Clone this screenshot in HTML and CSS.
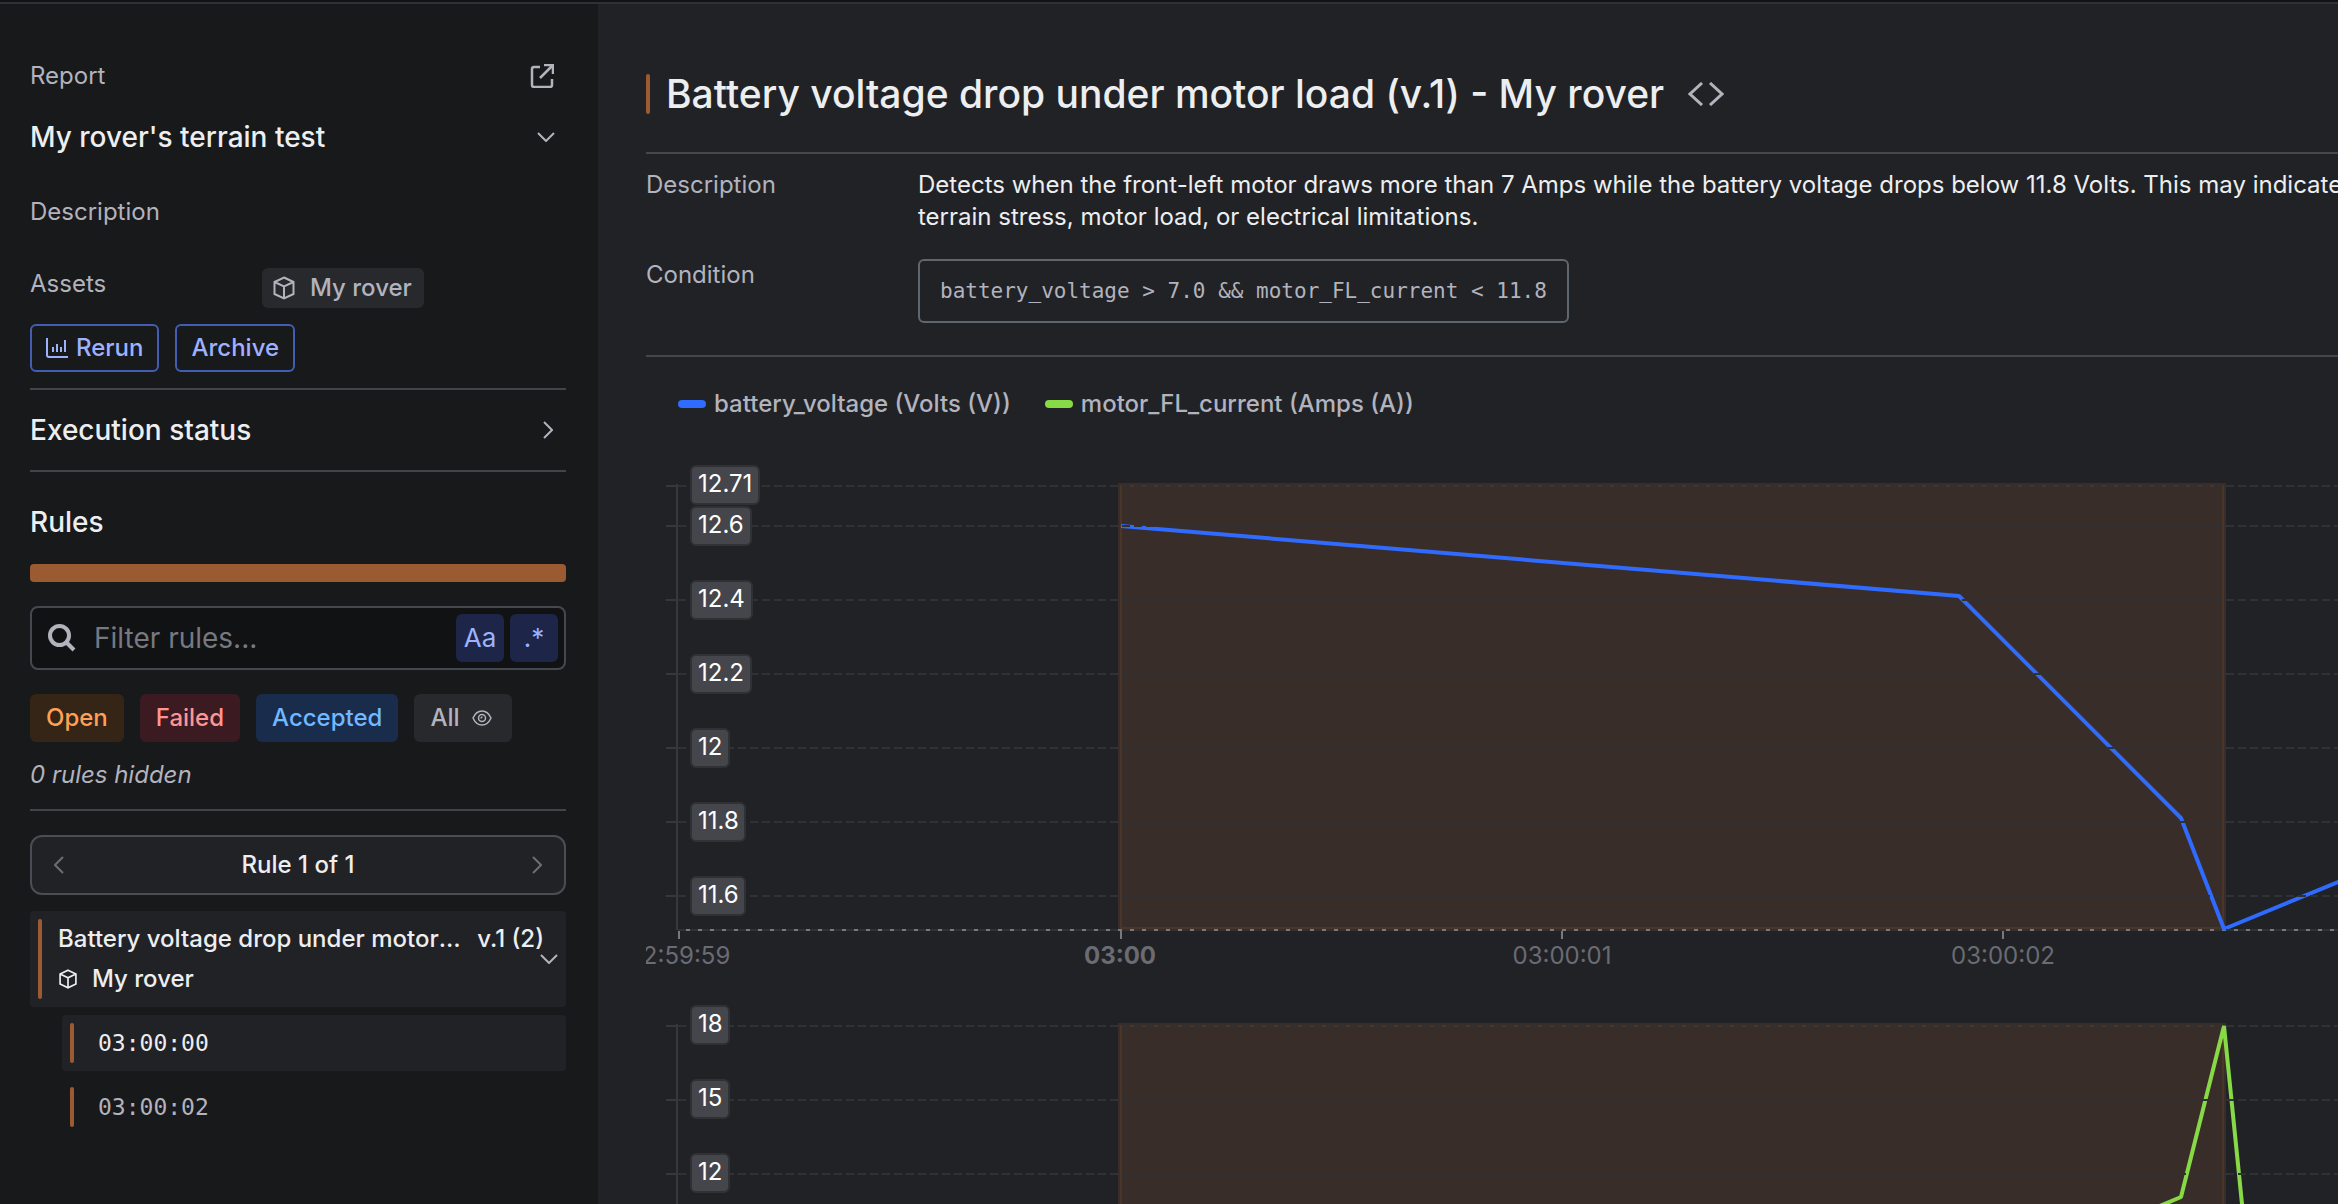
FILE: index.html
```html
<!DOCTYPE html>
<html lang="en">
  <head>
    <meta charset="UTF-8" />
    <meta name="viewport" content="width=device-width, initial-scale=1.0" />
    <title>My rover's terrain test</title>
    <link rel="stylesheet" href="styles.css">
  </head>
  <body>
    <!-- shared icons -->
    <svg class="sprite" aria-hidden="true">
      <symbol id="chevron-down" viewBox="0 0 18 10">
        <path d="M1 1l8 8 8-8" />
      </symbol>
      <symbol id="chevron-right" viewBox="0 0 10 18">
        <path d="M1 1l8 8-8 8" />
      </symbol>
      <symbol id="chevron-left" viewBox="0 0 10 18">
        <path d="M9 1L1 9l8 8" />
      </symbol>
      <symbol id="cube" viewBox="0 0 24 24">
        <path d="M12 1.5l9.500 4.500v12L12 22.500l-9.500-4.500v-12zM2.500 6L12 10.500l9.500-4.500M12 10.500v12" />
      </symbol>
    </svg>

    <div class="topbar"></div>
    <div class="layout">
      <aside class="sidebar">
        <div class="sidebar__row">
          <span class="label">Report</span>
          <a class="icon-link" href="#" aria-label="Open report">
            <svg class="icon icon--open" viewBox="0 0 24 24">
              <path d="M10 3H4a2 2 0 0 0-2 2v16a2 2 0 0 0 2 2h16a2 2 0 0 0 2-2v-6M14 1h9v9M23 1L10 14" />
            </svg>
          </a>
        </div>
        <button class="report-select" type="button">
          My rover's terrain test
          <svg class="icon icon--down"><use href="#chevron-down" /></svg>
        </button>
        <p class="label sidebar__description">Description</p>
        <div class="assets">
          <span class="label">Assets</span>
          <span class="asset-badge">
            <svg class="icon icon--cube"><use href="#cube" /></svg>My rover
          </span>
        </div>
        <div class="actions">
          <button class="btn" type="button">
            <svg class="icon icon--chart" viewBox="0 0 22 20">
              <path d="M1 0v17a2 2 0 0 0 2 2h19M7 9v5M11 6v8M15 9v5M19 2v12" />
            </svg>
            Rerun
          </button>
          <button class="btn" type="button">Archive</button>
        </div>

        <button class="execution" type="button">
          Execution status
          <svg class="icon icon--side"><use href="#chevron-right" /></svg>
        </button>

        <h2 class="sidebar__title">Rules</h2>
        <div class="progress"></div>
        <div class="search">
          <label class="search__label" for="filter">
            <svg class="icon icon--search" viewBox="0 0 28 28" aria-label="Filter rules">
              <circle cx="11.5" cy="11.5" r="9.5" />
              <path d="M18.5 18.5L26 26" />
            </svg>
          </label>
          <input class="search__input" id="filter" type="text" placeholder="Filter rules..." />
          <button class="search__btn" type="button" aria-label="Match case">Aa</button>
          <button class="search__btn" type="button" aria-label="Use regular expression">.*</button>
        </div>
        <div class="tags">
          <button class="tag tag--open" type="button">Open</button>
          <button class="tag tag--failed" type="button">Failed</button>
          <button class="tag tag--accepted" type="button">Accepted</button>
          <button class="tag tag--all" type="button">
            All
            <svg class="icon icon--eye" viewBox="0 0 20 20">
              <path d="M1 10c2-4.500 5-7 9-7s7 2.500 9 7c-2 4.500-5 7-9 7s-7-2.500-9-7z" />
              <circle cx="10" cy="10" r="3.5" />
              <path d="M10 8.500a1.500 1.500 0 0 1-1.500 1.500" />
            </svg>
          </button>
        </div>
        <p class="hidden-count">0 rules hidden</p>

        <div class="pager">
          <button class="pager__btn" type="button" aria-label="Previous rule">
            <svg class="icon icon--side"><use href="#chevron-left" /></svg>
          </button>
          <span>Rule 1 of 1</span>
          <button class="pager__btn" type="button" aria-label="Next rule">
            <svg class="icon icon--side"><use href="#chevron-right" /></svg>
          </button>
        </div>

        <button class="rule" type="button">
          <span class="bar"></span>
          <span class="rule__body">
            <span class="rule__head">
              <span class="rule__name">Battery voltage drop under motor load</span>
              <span>v.1 (2)</span>
            </span>
            <span class="rule__asset">
              <svg class="icon icon--cube-small"><use href="#cube" /></svg>My rover
            </span>
          </span>
          <svg class="icon icon--down"><use href="#chevron-down" /></svg>
        </button>
        <div class="times">
          <button class="time time--active" type="button"><span class="bar"></span>03:00:00</button>
          <button class="time" type="button"><span class="bar"></span>03:00:02</button>
        </div>
      </aside>

      <main class="main">
        <header class="main__header">
          <span class="bar bar--title"></span>
          <h1 class="main__title">Battery voltage drop under motor load (v.1) - My rover</h1>
          <button class="icon-link" type="button" aria-label="View code">
            <svg class="icon icon--code" viewBox="0 0 36 24">
              <path d="M14 1L2 12l12 11M22 1l12 11-12 11" />
            </svg>
          </button>
        </header>

        <dl class="details">
          <dt class="label">Description</dt>
          <dd>Detects when the front-left motor draws more than 7 Amps while the battery voltage drops below 11.8 Volts. This may indicate terrain stress, motor load, or electrical limitations.</dd>
          <dt class="label">Condition</dt>
          <dd><code class="condition">battery_voltage &gt; 7.0 &amp;&amp; motor_FL_current &lt; 11.8</code></dd>
        </dl>

        <ul class="legend">
          <li><span class="legend__key legend__key--voltage"></span>battery_voltage (Volts (V))</li>
          <li><span class="legend__key legend__key--current"></span>motor_FL_current (Amps (A))</li>
        </ul>

        <!-- battery voltage -->
        <svg class="chart" role="img" aria-label="battery_voltage">
          <rect class="chart__area" x="472" y="23" width="1108" height="446" />
          <path class="chart__area-edge" d="M475 26v442h1102V26z" />
          <path class="chart__base" d="M32 470H1800" />
          <path class="chart__tick" d="M33 471v8M475 471v8M916 471v8M1357 471v8M1798 471v8" />
          <path class="chart__line chart__line--voltage" d="M475 66L1313 136L1535 358L1578 469L1692 422L1800 377" />
          <path class="chart__grid" d="M32 26H1800M32 66H1800M32 140H1800M32 214H1800M32 288H1800M32 362H1800M32 436H1800M32 470H1800" />
          <path class="chart__axis" d="M31 24v446M20 26h12M20 66h12M20 140h12M20 214h12M20 288h12M20 362h12M20 436h12" />
          <g class="chart__box">
            <rect x="45" y="6" width="68" height="38" rx="5" />
            <rect x="45" y="47" width="60" height="38" rx="5" />
            <rect x="45" y="121" width="61" height="38" rx="5" />
            <rect x="45" y="195" width="60" height="38" rx="5" />
            <rect x="45" y="269" width="38" height="38" rx="5" />
            <rect x="45" y="343" width="54" height="38" rx="5" />
            <rect x="45" y="417" width="54" height="38" rx="5" />
          </g>
          <g class="chart__value">
            <text x="52" y="32">12.71</text>
            <text x="52" y="73">12.6</text>
            <text x="52" y="147">12.4</text>
            <text x="52" y="221">12.2</text>
            <text x="52" y="295">12</text>
            <text x="52" y="369">11.8</text>
            <text x="52" y="443">11.6</text>
          </g>
          <g class="chart__time">
            <text x="33" y="504">02:59:59</text>
            <text class="chart__time--major" x="474" y="504">03:00</text>
            <text x="916" y="504">03:00:01</text>
            <text x="1357" y="504">03:00:02</text>
          </g>
        </svg>

        <!-- motor current -->
        <svg class="chart" role="img" aria-label="motor_FL_current">
          <rect class="chart__area" x="472" y="43" width="1108" height="500" />
          <path class="chart__area-edge" d="M475 46v500h1102V46z" />
          <path class="chart__line chart__line--current" d="M1400 274L1535 217L1578 46L1596 224L1604 300" />
          <path class="chart__grid" d="M32 46H1800M32 120H1800M32 194H1800" />
          <path class="chart__axis" d="M31 44v476M20 46h12M20 120h12M20 194h12" />
          <g class="chart__box">
            <rect x="45" y="26" width="38" height="38" rx="5" />
            <rect x="45" y="100" width="38" height="38" rx="5" />
            <rect x="45" y="174" width="38" height="38" rx="5" />
          </g>
          <g class="chart__value">
            <text x="52" y="52">18</text>
            <text x="52" y="126">15</text>
            <text x="52" y="200">12</text>
          </g>
        </svg>
      </main>
    </div>
  </body>
</html>
```
FILE: styles.css
```css
* {
  margin: 0;
  padding: 0;
  box-sizing: border-box;
}

body {
  height: 100vh;
  display: flex;
  flex-direction: column;
  font-family: Inter, sans-serif;
  font-size: 24px;
  line-height: 32px;
  color: #edeef0;
  background-color: #212226;
}

button,
input {
  font: inherit;
  color: inherit;
  background: none;
  border: none;
}

button {
  cursor: pointer;
}

.sprite {
  position: absolute;
  width: 0;
  height: 0;
}

.topbar {
  flex: none;
  height: 4px;
  background-color: #111214;
  border-bottom: 2px solid #303136;
}

.layout {
  flex: 1;
  min-height: 0;
  display: flex;
  overflow: hidden;
}

.label {
  color: #b2b3bd;
}

.bar {
  flex: none;
  align-self: stretch;
  width: 4px;
  border-radius: 2px;
  background-color: #9a5b32;
}

/* icons */
.icon {
  flex: none;
  fill: none;
  stroke: #b2b3bd;
  stroke-width: 2;
}

.icon-link {
  display: flex;
}

.icon--open {
  width: 24px;
  height: 24px;
  stroke-width: 2.5;
}

.icon--down {
  width: 18px;
  height: 10px;
}

.icon--side {
  width: 10px;
  height: 18px;
}

.icon--cube {
  width: 24px;
  height: 24px;
}

.icon--cube-small {
  width: 20px;
  height: 20px;
  stroke: #edeef0;
}

.icon--chart {
  width: 22px;
  height: 20px;
  stroke: #9eb1ff;
}

.icon--search {
  width: 28px;
  height: 28px;
  stroke-width: 4;
}

.icon--eye {
  width: 20px;
  height: 20px;
  stroke-width: 1.5;
}

.icon--code {
  width: 36px;
  height: 24px;
  stroke-width: 3;
}

/* sidebar */
.sidebar {
  flex: none;
  width: 598px;
  padding: 56px 32px 0 30px;
  background-color: #18191b;
}

.sidebar__row,
.report-select,
.execution {
  width: 100%;
  display: flex;
  align-items: center;
  justify-content: space-between;
}

.sidebar__row {
  padding-right: 12px;
}

.report-select {
  margin-top: 25px;
  padding-right: 11px;
  font-size: 28px;
  font-weight: 500;
  line-height: 40px;
}

.sidebar__description {
  margin-top: 39px;
}

.assets {
  margin-top: 40px;
  display: grid;
  grid-template-columns: 232px auto;
  justify-content: start;
}

.asset-badge {
  display: flex;
  align-items: center;
  gap: 14px;
  height: 40px;
  padding: 0 12px 0 10px;
  border-radius: 6px;
  font-weight: 500;
  color: #b2b3bd;
  background-color: #28292d;
}

.actions {
  margin-top: 16px;
  padding-bottom: 16px;
  display: flex;
  gap: 16px;
  border-bottom: 2px solid #43444a;
}

.btn {
  display: flex;
  align-items: center;
  gap: 8px;
  height: 48px;
  padding: 0 14px;
  border: 2px solid #435db2;
  border-radius: 6px;
  font-weight: 500;
  color: #9eb1ff;
}

.execution {
  height: 82px;
  padding-right: 13px;
  border-bottom: 2px solid #43444a;
  font-size: 28px;
  font-weight: 500;
}

.sidebar__title {
  margin-top: 30px;
  font-size: 28px;
  font-weight: 500;
  line-height: 40px;
}

.progress {
  height: 18px;
  margin: 22px 0 24px;
  border-radius: 4px;
  background-color: #9a5b32;
}

.search {
  display: flex;
  align-items: center;
  gap: 6px;
  height: 64px;
  padding: 0 6px 0 16px;
  border: 2px solid #46484f;
  border-radius: 8px;
  background-color: #111214;
}

.search__label {
  display: flex;
}

.search__input {
  flex: 1;
  min-width: 0;
  padding-left: 12px;
  font-size: 28px;
  outline: none;
}

.search__input::placeholder {
  color: #777880;
}

.search__btn {
  width: 48px;
  height: 48px;
  border-radius: 6px;
  font-size: 26px;
  color: #9eb1ff;
  background-color: #1d2648;
}

.tags {
  margin-top: 24px;
  display: flex;
  gap: 16px;
}

.tag {
  display: flex;
  align-items: center;
  gap: 12px;
  height: 48px;
  padding: 0 16px;
  border-radius: 6px;
  font-weight: 500;
}

.tag--open {
  color: #ffa057;
  background-color: #352517;
}

.tag--failed {
  color: #ff9592;
  background-color: #3b1a22;
}

.tag--accepted {
  color: #70b8ff;
  background-color: #1a2c4c;
}

.tag--all {
  padding-right: 20px;
  color: #b2b3bd;
  background-color: #28292d;
}

.hidden-count {
  padding: 17px 0 18px;
  border-bottom: 2px solid #43444a;
  font-style: italic;
  color: #b2b3bd;
}

.pager {
  margin-top: 24px;
  height: 60px;
  display: flex;
  align-items: center;
  justify-content: space-between;
  border: 2px solid #4a4e54;
  border-radius: 12px;
  font-weight: 500;
  background-color: #212226;
}

.pager__btn {
  display: flex;
  padding: 12px 22px;
}

.pager__btn .icon {
  stroke: #696e77;
}

.rule {
  width: 100%;
  height: 96px;
  margin-top: 16px;
  padding: 8px;
  display: flex;
  align-items: center;
  border-radius: 4px;
  text-align: left;
  font-weight: 500;
  background-color: #212226;
}

.rule__body {
  flex: 1;
  min-width: 0;
  display: flex;
  flex-direction: column;
  gap: 8px;
  padding-left: 16px;
}

.rule__head {
  display: flex;
  gap: 12px;
  white-space: nowrap;
}

.rule__name {
  overflow: hidden;
  text-overflow: ellipsis;
}

.rule__asset {
  display: flex;
  align-items: center;
  gap: 14px;
}

.rule .icon--down {
  margin-left: -4px;
}

.times {
  padding-left: 32px;
}

.time {
  width: 100%;
  height: 56px;
  margin-top: 8px;
  padding: 8px;
  display: flex;
  align-items: center;
  gap: 24px;
  border-radius: 4px;
  font-family: "DejaVu Sans Mono", monospace;
  font-size: 23px;
  color: #b2b3bd;
}

.time--active {
  color: #edeef0;
  background-color: #212226;
}

/* report, wider than the window and cut off on the right */
.main {
  flex: none;
  min-width: 1760px;
  width: 76%;
  padding: 66px 0 0 48px;
}

.main__header {
  display: flex;
  align-items: center;
  padding-bottom: 34px;
  border-bottom: 2px solid #46474c;
}

.bar--title {
  align-self: center;
  height: 40px;
}

.main__title {
  margin: 0 24px 0 16px;
  font-size: 39px;
  font-weight: 500;
  line-height: 48px;
}

.details {
  display: grid;
  grid-template-columns: 272px 1fr;
  row-gap: 26px;
  padding: 15px 0 32px;
  border-bottom: 2px solid #46474c;
}

.condition {
  display: inline-flex;
  align-items: center;
  height: 64px;
  padding: 0 20px;
  border: 2px solid #60666e;
  border-radius: 6px;
  font-family: "DejaVu Sans Mono", monospace;
  font-size: 21px;
  color: #b2b3bd;
  vertical-align: top;
}

.legend {
  margin: 31px 0 40px 32px;
  display: flex;
  gap: 34px;
  list-style: none;
  font-weight: 500;
  color: #b2b3bd;
}

.legend li {
  display: flex;
  align-items: center;
  gap: 8px;
}

.legend__key {
  width: 28px;
  height: 8px;
  border-radius: 4px;
}

.legend__key--voltage {
  background-color: #2f6bff;
}

.legend__key--current {
  background-color: #87da45;
}

/* charts */
.chart {
  display: block;
  width: 100%;
  height: 520px;
  fill: none;
  stroke-width: 2;
}

.chart__area {
  fill: #392d29;
}

.chart__area-edge {
  stroke: #4a3529;
}

.chart__base,
.chart__tick {
  stroke: #777880;
}

.chart__grid {
  stroke: #2f3134;
  stroke-dasharray: 8 4;
}

.chart__axis {
  stroke: #37383b;
}

.chart__line {
  stroke-width: 4;
  stroke-linejoin: bevel;
}

.chart__line--voltage {
  stroke: #2f6bff;
}

.chart__line--current {
  stroke: #87da45;
}

.chart__box {
  fill: #45464b;
  stroke: #303135;
}

.chart__value {
  fill: #ffffff;
}

.chart__time {
  fill: #6a6b73;
  text-anchor: middle;
}

.chart__time--major {
  font-weight: 700;
}
```
